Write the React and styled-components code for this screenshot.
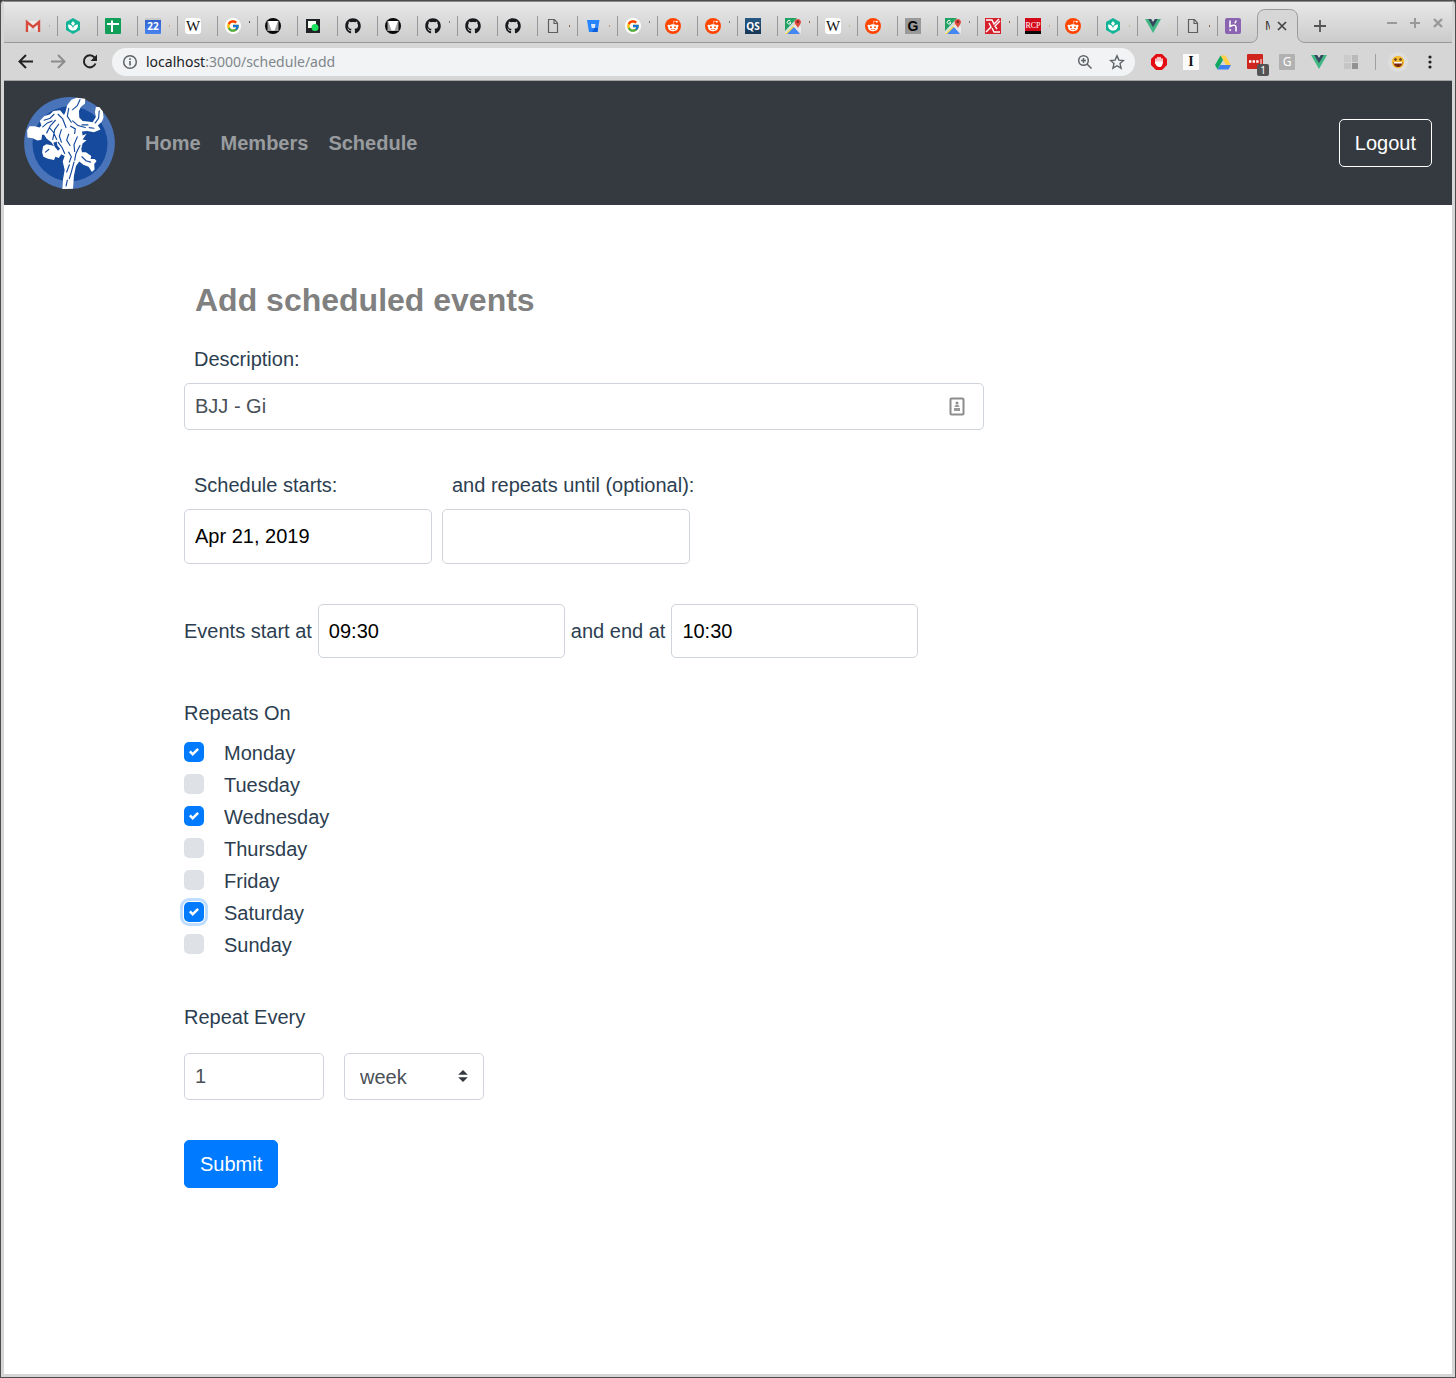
import React, { useState } from "react";
import styled, { createGlobalStyle, css } from "styled-components";
import { FaGithub, FaRedditAlien } from "react-icons/fa";
import { FcGoogle } from "react-icons/fc";

const GlobalStyle = createGlobalStyle`
  *, *::before, *::after { box-sizing: border-box; }
  body {
    margin: 0;
    background: #3c3c3f;
    color: #2c3e50;
    font: 20px/30px "Liberation Sans", Arial, sans-serif;
  }
  button, input, select { font: inherit; }
`;

const Window = styled.div`
  display: flex;
  flex-direction: column;
  min-height: 100vh;
  padding: 0 3px 3px;
  border: 1px solid #4d4d50;
  border-radius: 4px 4px 0 0;
  background: #d6d6d6;
`;

/* ---------- browser tabs ---------- */

const TabStrip = styled.div`
  display: flex;
  align-items: flex-start;
  height: 42px;
  padding: 14px 6px 0 14px;
  border-top: 1px solid #8a8a8c;
  border-bottom: 1px solid #999;
  background: linear-gradient(#e8e8e8, #cbcbcb);
`;

const Tab = styled.div`
  display: flex;
  flex: 0 0 40px;
  align-items: center;
  gap: 8px;
  height: 20px;
  padding-left: 7px;
  border-right: 1px solid ${(p) => (p.$last ? "transparent" : "#979797")};
`;

const Sliver = styled.span`
  width: 1px;
  height: 2px;
  margin-bottom: ${(p) => (p.$high ? 8 : 0)}px;
  background: ${(p) => p.$color};
`;

const ActiveTab = styled.div`
  position: relative;
  display: flex;
  flex: 0 0 40px;
  align-items: center;
  gap: 6px;
  height: 20px;
  padding-left: 7px;
`;

const TabOutline = styled.svg`
  position: absolute;
  left: -8px;
  top: -7px;
`;

const ClippedTitle = styled.span`
  position: relative;
  width: 5px;
  overflow: hidden;
  color: #333;
  font: 12px/16px "Noto Sans", sans-serif;
`;

const IconButton = styled.button`
  position: relative;
  display: flex;
  align-items: center;
  justify-content: center;
  flex: none;
  width: ${(p) => p.$size || 16}px;
  height: ${(p) => p.$size || 16}px;
  padding: 0;
  border: 0;
  background: none;
`;

const NewTab = styled(IconButton)`
  margin: 2px 0 0 14px;
`;

const WindowControls = styled.div`
  display: flex;
  gap: 7px;
  margin: -1px 0 0 auto;
`;

const Square = styled.span`
  display: flex;
  align-items: center;
  justify-content: center;
  flex: none;
  width: 16px;
  height: 16px;
  border-radius: ${(p) => p.$radius || 0}px;
  background: ${(p) => p.$bg};
  color: ${(p) => p.$color || "#fff"};
  font: ${(p) => p.$font};
`;

const Icon = styled.svg`
  display: block;
  flex: none;
`;

const Svg = ({ size = 16, box = "0 0 16 16", children }) => (
  <Icon width={size} height={size} viewBox={box} fill="none" aria-hidden="true">
    {children}
  </Icon>
);

const Gmail = () => (
  <Svg>
    <path d="M1 3h14v11H1z" fill="#ebebeb" />
    <path d="M3 14 8 9l5 5z" fill="#d8d8d8" />
    <path d="M2 14V4l6 5 6-5v10" stroke="#d54b3d" strokeWidth="2.400" />
  </Svg>
);

const Sprout = () => (
  <Svg>
    <path d="M8 0l7 4v8l-7 4-7-4V4z" fill="#10b596" />
    <path d="M8 3l2 2.500L8 8 6 5.500zM3 6.500c3 0 5 1.500 5 4.500 0-3 2-4.500 5-4.500 0 4-2 6-5 6s-5-2-5-6z" fill="#fff" />
  </Svg>
);

const Sheets = () => (
  <Svg>
    <rect width="16" height="16" rx="1" fill="#119e59" />
    <path d="M2 6h12M7 2.500V14" stroke="#fff" strokeWidth="2" />
  </Svg>
);

const Calendar = () => (
  <Square $bg="linear-gradient(#c9c9c9 2px, #2f62cf 2px, #4a83ee)" $radius={1} $font='bold 10px/16px "Open Sans", sans-serif'>
    22
  </Square>
);

const Wikipedia = () => (
  <Square $bg="#fff" $radius={3} $color="#111" $font='15px/16px "Liberation Serif", serif'>
    W
  </Square>
);

const Google = () => (
  <Square $bg="#fff" $radius={8}>
    <FcGoogle size={14} />
  </Square>
);

const Vcircle = () => (
  <Svg>
    <circle cx="8" cy="8" r="8" fill="#080808" />
    <path d="M2.500 3h11v10h-11z" fill="#a4a4a4" />
    <path d="M3 3h10L9.500 12.500h-3z" fill="#fff" />
  </Svg>
);

const DarkSquare = () => (
  <Svg>
    <path d="M1 1h14v14H1z" fill="#202326" />
    <path d="M3 3h8v7H3z" fill="#f6fff4" />
    <circle cx="10" cy="9.500" r="3.500" fill="#19e35f" />
  </Svg>
);

const Github = () => <FaGithub size={16} color="#17191c" />;

const Doc = () => (
  <Svg>
    <path d="M3.500 1.500h6l3 3.500v9.500h-9zM9 1.500V5.500h3.500" stroke="#5f5f5f" strokeWidth="1.200" />
  </Svg>
);

const Bitbucket = () => (
  <Svg>
    <path d="M2 2h12.500l-2 12H4z" fill="#2684ff" />
    <path d="M9.500 10h3.700l-.7 4H7z" fill="#0c5ed9" />
    <path d="M6 6h4.500l-.7 4H6.700z" fill="#d9e7fb" />
  </Svg>
);

const Reddit = () => (
  <Square $bg="#ff4500" $radius={8}>
    <FaRedditAlien size={12} />
  </Square>
);

const QS = () => (
  <Square $bg="linear-gradient(#285a86, #173654)" $font='bold 10px/16px "Open Sans", sans-serif'>
    QS
  </Square>
);

const Maps = () => (
  <Svg>
    <path d="M0 0h16v16H0z" fill="#d8dde3" />
    <path d="M0 0h12L0 13z" fill="#1fa362" />
    <path d="M0 16 13 3l2 2L4 16z" fill="#fbe04b" />
    <path d="M2 16 9 9l6 7z" fill="#4586f0" />
    <path d="M8 8l8 7V9l-4-3z" fill="#e8eaee" />
    <path d="M13 11c0-3-3.500-4-3.500-7.500a3.400 3.400 0 0 1 6.500 0C16 7 13 8 13 11z" fill="#de4a3c" />
    <circle cx="12.800" cy="3.800" r="1.300" fill="#7e2621" />
    <path d="M5.500 3.200a1.800 1.800 0 1 0 .3 1.500H4.300" stroke="#fff" />
  </Svg>
);

const GrayG = () => (
  <Square $bg="#999" $color="#050505" $font='bold 14px/16px "Liberation Sans", sans-serif'>
    G
  </Square>
);

const RedX = () => (
  <Svg>
    <path d="M0 0h16v16H0z" fill="#d6202c" />
    <path d="M1 2h6l2 4 5-5M1 14l5-5-2-4M15 14H9l-2-4M15 3l-5 5 2 3" stroke="#fff" strokeWidth="1.400" />
  </Svg>
);

const Rcp = () => (
  <Square $bg="linear-gradient(#d40a1b 13px, #080808 13px)" $font='8px/16px "Liberation Serif", serif'>
    RCP
  </Square>
);

const Vue = () => (
  <Svg>
    <path d="M0 1h4l4 7 4-7h4L8 15z" fill="#41b883" />
    <path d="M3.200 1h3L8 4l1.800-3h3L8 9.300z" fill="#34495e" />
  </Svg>
);

const Heroku = () => (
  <Svg>
    <rect width="16" height="16" rx="2" fill="#8a64b0" />
    <path d="M5 2.500v6C8 7 11 6.800 11 9v4.500M11 2.500c0 1.200-.5 2-1.300 2.800" stroke="#fff" strokeWidth="1.500" />
    <path d="M4.500 10.500v3l2-1.500z" fill="#fff" />
  </Svg>
);

const TABS = [
  [Gmail, "#b5b5b5"], [Sprout, "#d5d3b8"], [Sheets, "#d5d3b8"], [Calendar, "#c5ab8a"],
  [Wikipedia, "#d5d3b8"], [Google, "#555", true], [Vcircle, "#d5d3b8"], [DarkSquare, "#d5d3b8"],
  [Github, "#d5d3b8"], [Vcircle, "#d5d3b8"], [Github, "#777", true], [Github, "#d5d3b8"],
  [Github, "#d5d3b8"], [Doc, "#8a6a48"], [Bitbucket, "#c39a78"], [Google, "#777", true],
  [Reddit, "#d5d3b8"], [Reddit, "#777", true], [QS, "#d5d3b8"], [Maps, "#8a6a48", true],
  [Wikipedia, "#c9b89c"], [Reddit, "#d5d3b8"], [GrayG, "#d5d3b8"], [Maps, "#777", true],
  [RedX, "#8a6a48", true], [Rcp, "#c5ab8a"], [Reddit, "#d5d3b8"], [Sprout, "#c9b89c"],
  [Vue, "#d5d3b8"], [Doc, "#8a6a48"], [Heroku, "#d5d3b8"],
];

/* ---------- browser toolbar ---------- */

const Toolbar = styled.div`
  display: flex;
  align-items: center;
  height: 38px;
  padding: 0 14px;
  border-bottom: 1px solid #a3a3a3;
`;

const NavButtons = styled.div`
  display: flex;
  gap: 16px;
  margin-right: 14px;
`;

const Omnibox = styled.div`
  display: flex;
  flex: 1;
  align-items: center;
  gap: 8px;
  height: 28px;
  padding: 0 10px;
  border-radius: 14px;
  background: #f1f3f4;
`;

const OmniboxActions = styled.div`
  display: flex;
  gap: 16px;
`;

const Url = styled.div`
  flex: 1;
  color: #80868b;
  font: 14px/20px "Noto Sans", sans-serif;
`;

const Host = styled.span`
  color: #202124;
`;

const Extensions = styled.div`
  display: flex;
  align-items: center;
  gap: 16px;
  margin-left: 16px;
`;

const BadgeAnchor = styled.span`
  position: relative;
  width: 16px;
  height: 16px;
`;

const Badge = styled.span`
  position: absolute;
  left: 10px;
  top: 10px;
  width: 12px;
  height: 12px;
  border-radius: 2px;
  background: #545454;
  color: #fff;
  font: 10px/12px "Noto Sans", sans-serif;
  text-align: center;
`;

const Profile = styled.div`
  display: flex;
  align-items: center;
  gap: 14px;
  margin-left: 16px;
`;

const Divider = styled.span`
  width: 1px;
  height: 16px;
  margin-right: -2px;
  background: #a0a0a0;
`;

function BrowserChrome() {
  return (
    <>
      <TabStrip>
        {TABS.map(([Fav, color, high], i) => (
          <Tab key={i} $last={i === TABS.length - 1}>
            <Fav />
            <Sliver $color={color} $high={high} />
          </Tab>
        ))}
        <ActiveTab>
          <TabOutline width="56" height="35" viewBox="0 0 56 35" fill="none" aria-hidden="true">
            <path d="M0 33.500c5 0 7.500-3 7.500-8V8.500c0-5 3-8 8-8h24c5 0 8 3 8 8v17c0 5 3 8 8 8V35H0z" fill="#d6d6d6" />
            <path d="M0 33.500c5 0 7.500-3 7.500-8V8.500c0-5 3-8 8-8h24c5 0 8 3 8 8v17c0 5 3 8 8 8" stroke="#999" />
          </TabOutline>
          <ClippedTitle>M</ClippedTitle>
          <IconButton $size={12} aria-label="Close tab">
            <Svg size={12} box="0 0 12 12">
              <path d="M2 2l8 8M10 2l-8 8" stroke="#444" strokeWidth="1.700" />
            </Svg>
          </IconButton>
        </ActiveTab>
        <NewTab aria-label="New tab">
          <Svg>
            <path d="M8 2v12M2 8h12" stroke="#555" strokeWidth="1.800" />
          </Svg>
        </NewTab>
        <WindowControls>
          <IconButton aria-label="Minimize">
            <Svg><path d="M3 8h10" stroke="#999" strokeWidth="2" /></Svg>
          </IconButton>
          <IconButton aria-label="Maximize">
            <Svg><path d="M3 8h10M8 3v10" stroke="#999" strokeWidth="2" /></Svg>
          </IconButton>
          <IconButton aria-label="Close">
            <Svg><path d="M4 4l8 8M12 4l-8 8" stroke="#999" strokeWidth="2.400" /></Svg>
          </IconButton>
        </WindowControls>
      </TabStrip>

      <Toolbar>
        <NavButtons>
          <IconButton aria-label="Back">
            <Svg><path d="M15 7.500H2M8 1 1.500 7.500 8 14" stroke="#222" strokeWidth="2" /></Svg>
          </IconButton>
          <IconButton aria-label="Forward">
            <Svg><path d="M1 7.500h13M8 1 14.500 7.500 8 14" stroke="#8c8c8c" strokeWidth="2" /></Svg>
          </IconButton>
          <IconButton aria-label="Reload">
            <Svg>
              <path d="M13.500 9.500A6 6 0 1 1 12.500 3.500" stroke="#222" strokeWidth="2" />
              <path d="M15 .5V7H8.500z" fill="#222" />
            </Svg>
          </IconButton>
        </NavButtons>
        <Omnibox>
          <Svg>
            <circle cx="8" cy="8" r="6.300" stroke="#5f6368" strokeWidth="1.500" />
            <path d="M8 7v4.500M8 4.300V6" stroke="#5f6368" strokeWidth="1.600" />
          </Svg>
          <Url><Host>localhost</Host>:3000/schedule/add</Url>
          <OmniboxActions>
            <IconButton aria-label="Zoom">
              <Svg>
                <circle cx="6.500" cy="6.500" r="4.800" stroke="#5f6368" strokeWidth="1.500" />
                <path d="M10 10l4.500 4.500M6.500 4v5M4 6.500h5" stroke="#5f6368" strokeWidth="1.500" />
              </Svg>
            </IconButton>
            <IconButton aria-label="Bookmark">
              <Svg>
                <path d="M8 1.800l1.900 4.300 4.600.4-3.500 3.100 1.100 4.600L8 11.700l-4.100 2.500L5 9.600 1.500 6.500l4.600-.4z" stroke="#5f6368" strokeWidth="1.400" />
              </Svg>
            </IconButton>
          </OmniboxActions>
        </Omnibox>
        <Extensions>
          <Svg>
            <path d="M5 0h6l5 5v6l-5 5H5l-5-5V5z" fill="#e40d14" />
            <path d="M5 9V5M7 8V3.500M9 8V3.500M11 9V5" stroke="#fff" strokeWidth="1.500" strokeLinecap="round" />
            <path d="M4.500 7.500h7.200c0 3-.7 5.500-3 5.500S5.500 12 4 9z" fill="#fff" />
          </Svg>
          <Square $bg="#fbfbfb" $color="#111" $font='bold 14px/16px "Liberation Serif", serif'>I</Square>
          <Svg>
            <path d="M5.500 1.500h5L16 11h-5z" fill="#ffcf48" />
            <path d="M5.500 1.500 8 6 2.500 15.500 0 11z" fill="#11a861" />
            <path d="M5.300 11H16l-2.500 4.500h-11z" fill="#3f7ff0" />
          </Svg>
          <BadgeAnchor>
            <Svg>
              <rect width="16" height="15" rx="1" fill="#d0241e" />
              <path d="M2 7.500h10" stroke="#fff" strokeWidth="2.400" strokeDasharray="2.400 1.200" />
              <path d="M14 5v5" stroke="#fff" />
            </Svg>
            <Badge>1</Badge>
          </BadgeAnchor>
          <Square $bg="#b1b1b1" $radius={1} $font='12px/16px "Noto Sans", sans-serif'>G</Square>
          <Vue />
          <Svg>
            <path d="M1 1h7v7H1z" fill="#cbcbcb" />
            <path d="M9 1h6v7H9z" fill="#bababa" />
            <path d="M1 9h7v6H1z" fill="#c5c5c5" />
            <path d="M9 9h6v6H9z" fill="#929292" />
          </Svg>
        </Extensions>
        <Profile>
          <Divider />
          <Svg size={20} box="0 0 20 20">
            <circle cx="10" cy="10" r="10" fill="#dedede" />
            <circle cx="10" cy="10" r="6.200" fill="#f5bb35" />
            <path d="M5.500 10h9c0 3-2 5-4.500 5s-4.500-2-4.500-5z" fill="#7d2b12" />
            <path d="M6 10h8v1.500H6z" fill="#fff" />
            <circle cx="7.500" cy="7.500" r="1.300" fill="#5a3510" />
            <circle cx="12.500" cy="7.500" r="1.300" fill="#5a3510" />
          </Svg>
          <IconButton aria-label="Browser menu">
            <Svg>
              <circle cx="8" cy="3" r="1.600" fill="#222" />
              <circle cx="8" cy="8" r="1.600" fill="#222" />
              <circle cx="8" cy="13" r="1.600" fill="#222" />
            </Svg>
          </IconButton>
        </Profile>
      </Toolbar>
    </>
  );
}

/* ---------- site header ---------- */

const Navbar = styled.nav`
  display: flex;
  align-items: center;
  padding: 16px 20px;
  background: #353a40;
`;

const Brand = styled.a`
  display: block;
  margin-right: 20px;
`;

const NavLink = styled.a`
  padding: 10px;
  color: #999c9f;
  font-weight: bold;
  text-decoration: none;
`;

const buttonBase = css`
  height: 48px;
  padding: 0 15px;
  border: 1px solid;
  border-radius: 5px;
  color: #fff;
`;

const LogoutButton = styled.button`
  ${buttonBase}
  margin-left: auto;
  border-color: #fff;
  background: transparent;
`;

const Logo = () => (
  <Icon width="91" height="92" viewBox="30 20 273 277" role="img" aria-label="Judo club">
    <ellipse cx="166.500" cy="158.500" rx="136.500" ry="138.500" fill="#4a74b9" />
    <circle cx="168" cy="161" r="113" fill="#164a9c" />
    <path
      fill="#fff"
      d="M154 66 160 44 172 28 188 22 214 25 213 40 201 49 195 62 196 82 206 92 222 94 236 96 246 80 243 66 246 50 256 50 267 64 269 82 264 94 252 106 260 118 240 126 220 122 204 124 206 136 218 131 206 148 218 150 206 160 202 176 204 186 216 186 232 198 230 207 242 207 248 213 241 222 242 238 234 246 224 230 208 224 196 214 186 228 180 256 177 296 145 297 147 268 152 240 146 214 152 198 142 192 134 204 124 200 120 210 102 206 88 200 84 186 87 168 97 162 112 165 120 168 112 156 98 146 90 134 84 134 82 149 70 151 56 144 40 142 39 120 46 108 62 108 76 112 82 106 77 92 90 78 108 72 118 62 138 60 150 74z"
    />
    <g fill="none" stroke="#164a9c" strokeWidth="3.500" strokeLinecap="round">
      <path d="M90 90 108 84 120 72M86 110 100 98 114 92M98 128 108 108 124 90M116 148 122 118 134 102M132 72 146 86 156 112M106 112 118 126 128 148M142 118 136 138 142 156" />
      <path d="M164 54 160 78 172 96M198 28 190 46 176 58M200 58 202 72 208 84M176 92 192 106 214 112M170 108 184 116 182 130M204 104 222 104M256 62 254 84 244 98M226 112 240 114" />
      <path d="M132 156 144 172 152 190M164 132 158 150 168 166M190 140 180 164 182 184M198 166 186 190 182 210M164 186 172 200 166 216M204 200 216 212 230 216M166 224 158 246M180 216 172 246 166 266M160 270 156 288M94 186 104 178" />
    </g>
    <path d="M118 158 128 154 130 166 138 176 132 182 122 170z" fill="#164a9c" />
  </Icon>
);

/* ---------- form ---------- */

const Main = styled.main`
  flex: 1;
  background: #fff;
`;

const Container = styled.form`
  width: 100%;
  padding: 76px 180px 180px;
`;

const Title = styled.h1`
  margin: 0 0 25px;
  padding-left: 11px;
  color: #808080;
  font-size: 32px;
  line-height: 38px;
`;

const Label = styled.label`
  display: block;
  padding-left: 10px;
  margin-bottom: 9px;
`;

const field = css`
  display: block;
  width: 100%;
  padding: 0 10px;
  border: 1px solid #ced4da;
  border-radius: 5px;
  background: #fff;
  outline: 0;
`;

const TextInput = styled.input`
  ${field}
  height: 47px;
  color: #495057;
  appearance: textfield;
`;

const PickerInput = styled.input`
  ${field}
  width: ${(p) => (p.$inline ? "247px" : "100%")};
  height: ${(p) => (p.$inline ? 54 : 55)}px;
  color: #000;
`;

const Description = styled.div`
  max-width: 800px;
  margin-bottom: 40px;
`;

const InputFrame = styled.div`
  position: relative;
`;

const AutofillMark = styled.svg`
  position: absolute;
  right: 19px;
  top: 14px;
`;

const DateRow = styled.div`
  display: grid;
  grid-template-columns: repeat(2, 248px);
  gap: 10px;
  margin-bottom: 40px;
`;

const DateField = styled.div`
  min-width: 0;
  white-space: nowrap;
`;

const TimeRow = styled.div`
  display: flex;
  align-items: center;
  gap: 6px;
  margin-bottom: 40px;
`;

const Group = styled.fieldset`
  margin: 0 0 ${(p) => p.$below}px;
  padding: 0;
  border: 0;
`;

const Legend = styled.legend`
  padding: 0;
  margin-bottom: ${(p) => p.$below}px;
`;

const Day = styled.label`
  display: flex;
  align-items: center;
  gap: 20px;
  width: fit-content;
  height: 32px;
`;

const CheckFrame = styled.span`
  display: grid;
  place-items: center;
  width: 20px;
  height: 20px;
  margin-bottom: 2px;

  > * { grid-area: 1 / 1; }
  > svg { pointer-events: none; }
`;

const Checkbox = styled.input`
  appearance: none;
  width: 20px;
  height: 20px;
  margin: 0;
  border-radius: 5px;
  background: #dee2e6;
  outline: 0;

  &:checked { background: #007bff; }
  &:focus { box-shadow: 0 0 0 1px #fff, 0 0 0 4px #bfdeff; }
`;

const RepeatRow = styled.div`
  display: grid;
  grid-template-columns: repeat(2, 140px);
  gap: 20px;
`;

const SelectFrame = styled.div`
  position: relative;
`;

const Select = styled.select`
  ${field}
  height: 47px;
  padding: 0 15px;
  color: #495057;
  appearance: none;
`;

const SelectArrows = styled.svg`
  position: absolute;
  right: 16px;
  top: 17px;
  pointer-events: none;
`;

const SubmitButton = styled.button`
  ${buttonBase}
  border-color: #007bff;
  background: #007bff;
`;

const DAYS = ["Monday", "Tuesday", "Wednesday", "Thursday", "Friday", "Saturday", "Sunday"];

export default function App() {
  const [days, setDays] = useState(["Monday", "Wednesday", "Saturday"]);
  const toggle = (day) =>
    setDays((list) => (list.includes(day) ? list.filter((d) => d !== day) : [...list, day]));

  return (
    <Window>
      <GlobalStyle />
      <BrowserChrome />
      <Navbar>
        <Brand href="#"><Logo /></Brand>
        <NavLink href="#">Home</NavLink>
        <NavLink href="#">Members</NavLink>
        <NavLink href="#">Schedule</NavLink>
        <LogoutButton type="button">Logout</LogoutButton>
      </Navbar>
      <Main>
        <Container onSubmit={(e) => e.preventDefault()}>
          <Title>Add scheduled events</Title>

          <Description>
            <Label htmlFor="description">Description:</Label>
            <InputFrame>
              <TextInput id="description" defaultValue="BJJ - Gi" />
              <AutofillMark width="16" height="19" viewBox="0 0 16 19" fill="none" aria-hidden="true">
                <rect x="1.500" y="1.500" width="13" height="16" rx="1" stroke="#8c8c8c" strokeWidth="2" />
                <circle cx="8" cy="6" r="1.500" fill="#8c8c8c" />
                <path d="M5.500 10c0-3 5-3 5 0zM5 11h6v3H5z" fill="#999" />
              </AutofillMark>
            </InputFrame>
          </Description>

          <DateRow>
            <DateField>
              <Label htmlFor="starts">Schedule starts:</Label>
              <PickerInput id="starts" defaultValue="Apr 21, 2019" />
            </DateField>
            <DateField>
              <Label htmlFor="until">and repeats until (optional):</Label>
              <PickerInput id="until" />
            </DateField>
          </DateRow>

          <TimeRow>
            <label htmlFor="from">Events start at</label>
            <PickerInput id="from" $inline defaultValue="09:30" />
            <label htmlFor="to">and end at</label>
            <PickerInput id="to" $inline defaultValue="10:30" />
          </TimeRow>

          <Group $below={41}>
            <Legend $below={9}>Repeats On</Legend>
            {DAYS.map((day) => (
              <Day key={day}>
                <CheckFrame>
                  <Checkbox
                    type="checkbox"
                    checked={days.includes(day)}
                    onChange={() => toggle(day)}
                    autoFocus={day === "Saturday"}
                  />
                  {days.includes(day) && (
                    <Svg size={10} box="0 0 8 8">
                      <path fill="#fff" d="M6.564.75l-3.590 3.612-1.538-1.550L0 4.260 2.974 7.250 8 2.193z" />
                    </Svg>
                  )}
                </CheckFrame>
                {day}
              </Day>
            ))}
          </Group>

          <Group $below={40}>
            <Legend $below={21}>Repeat Every</Legend>
            <RepeatRow>
              <TextInput type="number" aria-label="Interval" defaultValue="1" />
              <SelectFrame>
                <Select aria-label="Unit" defaultValue="week">
                  <option>day</option>
                  <option>week</option>
                  <option>month</option>
                </Select>
                <SelectArrows width="10" height="12" viewBox="0 0 4 5" aria-hidden="true">
                  <path fill="#343a40" d="M2 0L0 2h4zm0 5L0 3h4z" />
                </SelectArrows>
              </SelectFrame>
            </RepeatRow>
          </Group>

          <SubmitButton type="submit">Submit</SubmitButton>
        </Container>
      </Main>
    </Window>
  );
}
